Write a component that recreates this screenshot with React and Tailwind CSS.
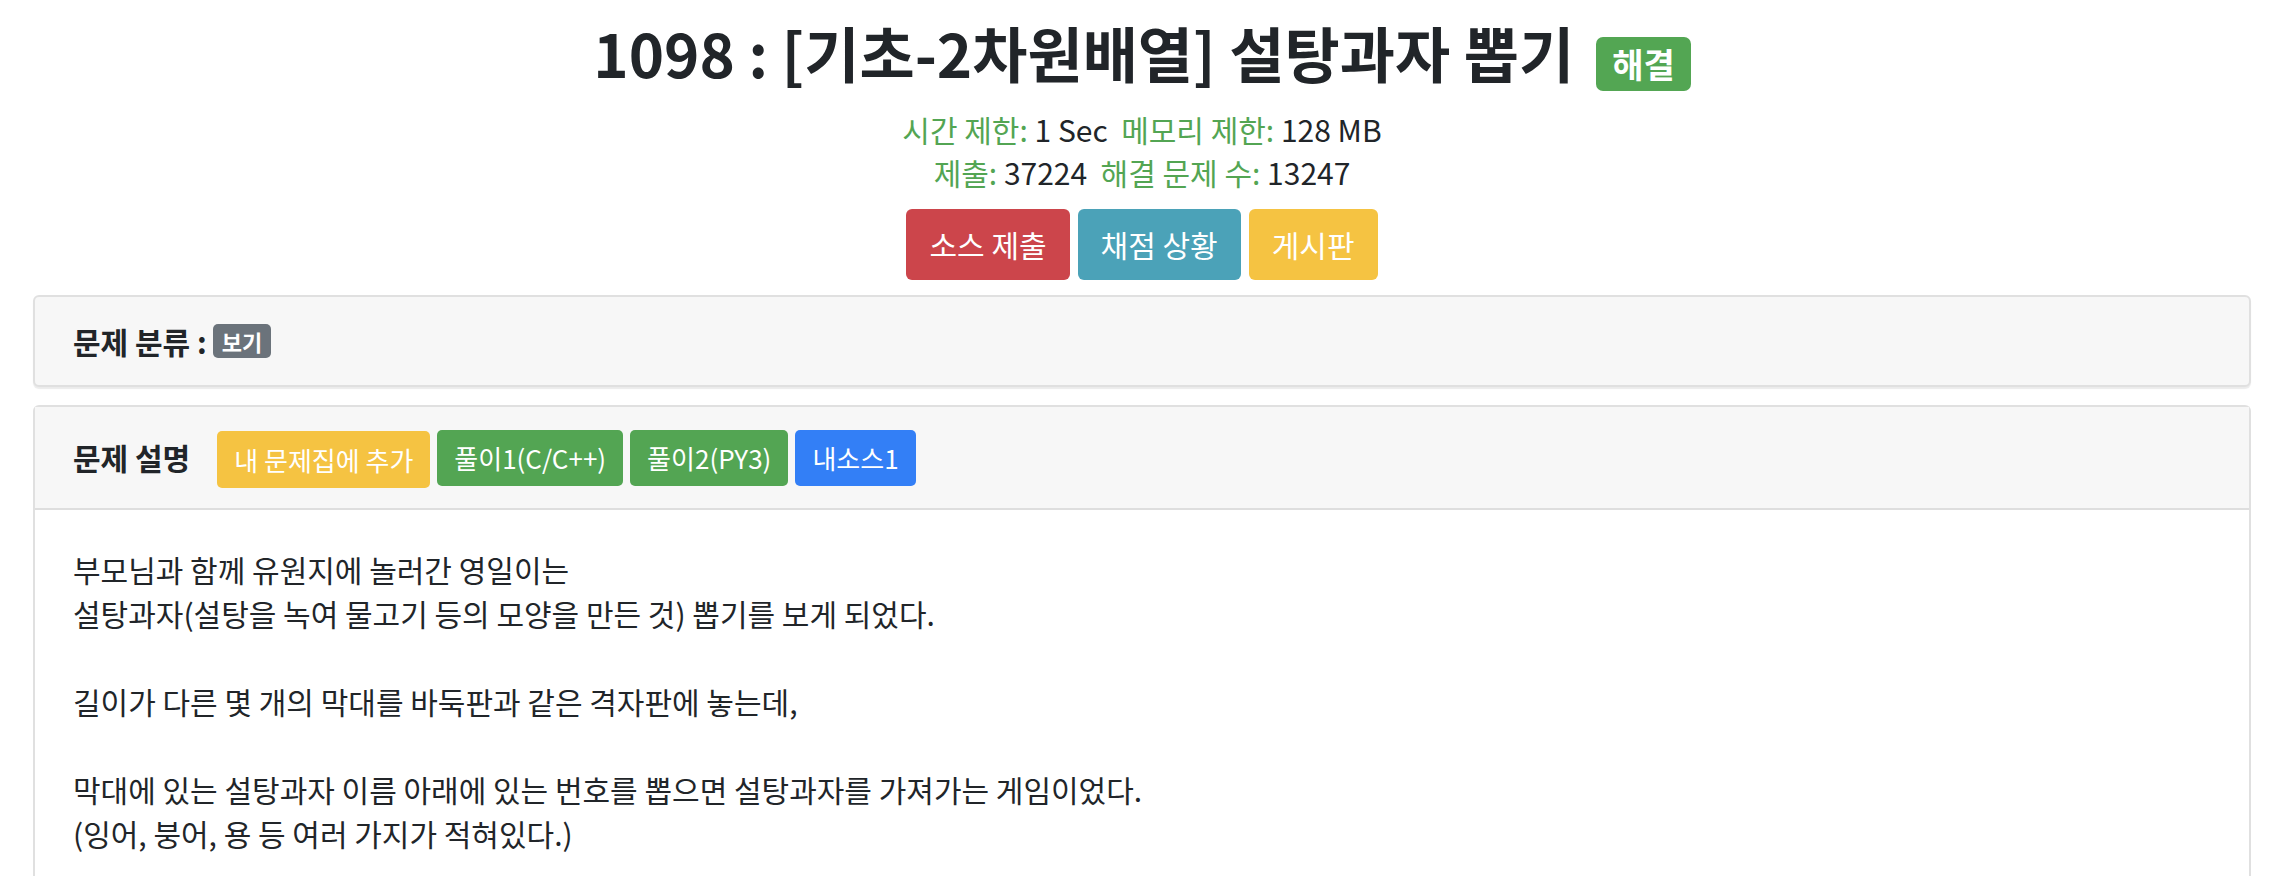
export default function App() {
  return (
    <div className="min-h-screen bg-white text-[#212529] font-['Noto_Sans_CJK_KR','Noto_Sans',sans-serif]">
      <div className="ml-[33px] mr-[23px]">
        {/* Title */}
        <div className="flex items-baseline justify-center pt-[17px]">
          <h1 className="text-[60px] font-bold leading-[70px]">1098 : [기초-2차원배열] 설탕과자 뽑기</h1>
          <span className="ml-[22px] rounded-[7px] bg-[#53a653] px-[16px] py-[10px] text-[34px] font-bold leading-[34px] text-white">
            해결
          </span>
        </div>

        {/* Limits */}
        <div className="mt-[17px] text-center text-[30px] leading-[43px]">
          <div>
            <span className="text-[#53a553]">시간 제한:</span> 1 Sec&nbsp; <span className="text-[#53a553]">메모리 제한:</span> 128 MB
          </div>
          <div>
            <span className="text-[#53a553]">제출:</span> 37224&nbsp; <span className="text-[#53a553]">해결 문제 수:</span> 13247
          </div>
        </div>

        {/* Actions */}
        <div className="mt-[15px] flex justify-center gap-[8px]">
          <button className="flex h-[71px] items-center rounded-[6px] bg-[#cc454b] px-[23px] text-[30px] text-white">소스 제출</button>
          <button className="flex h-[71px] items-center rounded-[6px] bg-[#4ba2b8] px-[23px] text-[30px] text-white">채점 상황</button>
          <button className="flex h-[71px] items-center rounded-[6px] bg-[#f5c342] px-[23px] text-[30px] text-white">게시판</button>
        </div>

        {/* Category card */}
        <div className="mt-[15px] flex h-[92px] items-center rounded-[6px] border-2 border-[#e0e0e0] bg-[#f7f7f7] px-[38px] shadow-[0_2px_1px_rgba(0,0,0,0.08)]">
          <span className="text-[30px] font-bold">문제 분류 :</span>
          <span className="ml-[6px] rounded-[5px] bg-[#6b737b] px-[9px] py-[6px] text-[22px] font-bold leading-[22px] text-white">보기</span>
        </div>

        {/* Description card */}
        <div className="mt-[18px] rounded-t-[6px] border-2 border-b-0 border-[#e0e0e0]">
          <div className="flex h-[103px] items-center border-b-2 border-[#dedede] bg-[#f7f7f7] px-[38px]">
            <span className="text-[30px] font-bold">문제 설명</span>
            <div className="ml-[27px] flex items-center gap-[7px]">
              <button className="mt-[3px] flex h-[57px] items-center rounded-[5px] bg-[#f5c342] px-[17px] text-[26px] text-white">내 문제집에 추가</button>
              <button className="flex h-[56px] items-center rounded-[5px] bg-[#53a553] px-[17px] text-[26px] text-white">풀이1(C/C++)</button>
              <button className="flex h-[56px] items-center rounded-[5px] bg-[#53a553] px-[17px] text-[26px] text-white">풀이2(PY3)</button>
              <button className="flex h-[56px] items-center rounded-[5px] bg-[#337ff6] px-[17px] text-[26px] text-white">내소스1</button>
            </div>
          </div>
          <div className="bg-white px-[38px] pt-[37px] pb-[40px] text-[30px] leading-[44px]">
            부모님과 함께 유원지에 놀러간 영일이는
            <br />
            설탕과자(설탕을 녹여 물고기 등의 모양을 만든 것) 뽑기를 보게 되었다.
            <br />
            <br />
            길이가 다른 몇 개의 막대를 바둑판과 같은 격자판에 놓는데,
            <br />
            <br />
            막대에 있는 설탕과자 이름 아래에 있는 번호를 뽑으면 설탕과자를 가져가는 게임이었다.
            <br />
            (잉어, 붕어, 용 등 여러 가지가 적혀있다.)
          </div>
        </div>
      </div>
    </div>
  )
}
